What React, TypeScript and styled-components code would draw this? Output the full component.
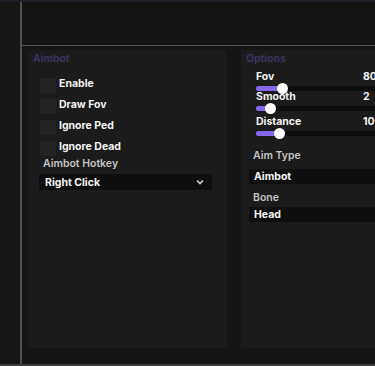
import React from "react";
import styled, { createGlobalStyle } from "styled-components";

const GlobalStyle = createGlobalStyle`
  html, body {
    margin: 0;
    padding: 0;
    background: #141414;
    overflow: hidden;
  }
  body {
    font-family: "Inter", "Open Sans", sans-serif;
  }
`;

interface SliderData {
  label: string;
  value: number;
  max: number;
  offset: number;
}

const sliders: SliderData[] = [
  { label: "Fov", value: 80, max: 370, offset: 0 },
  { label: "Smooth", value: 2, max: 17, offset: -1 },
  { label: "Distance", value: 10, max: 52, offset: 4 },
];

const toggles = ["Enable", "Draw Fov", "Ignore Ped", "Ignore Dead"];

const TRACK = 124;

export default function App() {
  return (
    <>
      <GlobalStyle />
      <Frame>
        <TopStrip />
        <Body>
          <Sidebar />
          <Main>
            <Header />
            <Content>
              <LeftPanel>
                <PanelTitle>Aimbot</PanelTitle>
                <ToggleList>
                  {toggles.map((t) => (
                    <ToggleRow key={t}>
                      <Checkbox />
                      <ToggleText>{t}</ToggleText>
                    </ToggleRow>
                  ))}
                </ToggleList>
                <FieldLabel indent={15}>Aimbot Hotkey</FieldLabel>
                <Dropdown>
                  <span>Right Click</span>
                  <svg width="8" height="6" viewBox="0 0 8 6">
                    <path
                      d="M1 1.5 L4 4.5 L7 1.5"
                      stroke="#d0d0d0"
                      strokeWidth="1.6"
                      fill="none"
                    />
                  </svg>
                </Dropdown>
              </LeftPanel>
              <RightPanel>
                <PanelTitle>Options</PanelTitle>
                <SliderList>
                  {sliders.map((s) => (
                    <SliderGroup key={s.label} offset={s.offset}>
                      <SliderHead>
                        <span>{s.label}</span>
                        <span>{s.value}</span>
                      </SliderHead>
                      <Track>
                        <Fill style={{ width: (s.value / s.max) * TRACK }}>
                          <Thumb />
                        </Fill>
                      </Track>
                    </SliderGroup>
                  ))}
                </SliderList>
                <FieldLabel indent={12} top={13}>
                  Aim Type
                </FieldLabel>
                <SelectBar top={6}>Aimbot</SelectBar>
                <FieldLabel indent={12} top={7}>
                  Bone
                </FieldLabel>
                <SelectBar top={2}>Head</SelectBar>
              </RightPanel>
            </Content>
          </Main>
        </Body>
      </Frame>
    </>
  );
}

const Frame = styled.div`
  width: 375px;
  height: 366px;
  display: flex;
  flex-direction: column;
  background: #141414;
  border-bottom: 2px solid #3a3a3a;
  box-sizing: border-box;
  overflow: hidden;
`;

const TopStrip = styled.div`
  height: 2px;
  background: #1f1f28;
  flex-shrink: 0;
`;

const Body = styled.div`
  flex: 1;
  display: flex;
  min-height: 0;
`;

const Sidebar = styled.div`
  width: 20px;
  flex-shrink: 0;
  background: #161616;
  border-right: 2px solid #4e4e4e;
`;

const Main = styled.div`
  flex: 1;
  display: flex;
  flex-direction: column;
  min-width: 0;
`;

const Header = styled.div`
  height: 43px;
  flex-shrink: 0;
  background: #141414;
  border-bottom: 1px solid #555555;
`;

const Content = styled.div`
  flex: 1;
  display: flex;
  gap: 14px;
  padding: 4px 0 0 6px;
  background: #151515;
`;

const Panel = styled.div`
  height: 298px;
  background: #1b1b1b;
  box-sizing: border-box;
  padding-top: 2px;
  flex-shrink: 0;
`;

const LeftPanel = styled(Panel)`
  width: 199px;
`;

const RightPanel = styled(Panel)`
  width: 160px;
`;

const PanelTitle = styled.div`
  height: 14px;
  line-height: 14px;
  padding-left: 5px;
  font-size: 10.5px;
  font-weight: 600;
  color: #3b3564;
`;

const ToggleList = styled.div`
  display: flex;
  flex-direction: column;
  gap: 5px;
  margin-top: 11px;
  padding-left: 12px;
`;

const ToggleRow = styled.div`
  display: flex;
  align-items: center;
  gap: 3px;
  height: 16px;
`;

const Checkbox = styled.div`
  width: 16px;
  height: 15px;
  background: #232323;
  border-radius: 1px;
`;

const ToggleText = styled.span`
  font-size: 10.5px;
  font-weight: 700;
  color: #f2f2f2;
  line-height: 14px;
  margin-top: -3px;
`;

const FieldLabel = styled.div<{ indent: number; top?: number }>`
  height: 14px;
  line-height: 14px;
  margin-top: ${(p) => p.top ?? 1}px;
  padding-left: ${(p) => p.indent}px;
  font-size: 10.5px;
  font-weight: 600;
  color: #c4c4c4;
`;

const Dropdown = styled.div`
  margin: 3px 0 0 11px;
  width: 173px;
  height: 16px;
  box-sizing: border-box;
  padding: 0 8px 0 6px;
  display: flex;
  align-items: center;
  justify-content: space-between;
  background: #0f0f0f;
  font-size: 10.5px;
  font-weight: 700;
  color: #f5f5f5;
`;

const SliderList = styled.div`
  display: flex;
  flex-direction: column;
  margin-top: 4px;
  padding-left: 15px;
`;

const SliderGroup = styled.div<{ offset: number }>`
  margin-top: ${(p) => p.offset}px;
`;

const SliderHead = styled.div`
  display: grid;
  grid-template-columns: 107px auto;
  height: 14px;
  line-height: 14px;
  font-size: 10.5px;
  font-weight: 700;
  color: #f2f2f2;
`;

const Track = styled.div`
  position: relative;
  width: ${TRACK}px;
  height: 5px;
  margin-top: 2px;
  background: #0d0d0d;
  border-radius: 2px;
`;

const Fill = styled.div`
  position: relative;
  height: 100%;
  background: #8467ec;
  border-radius: 2px 0 0 2px;
`;

const Thumb = styled.div`
  position: absolute;
  right: -5px;
  top: 50%;
  width: 11px;
  height: 11px;
  margin-top: -5.5px;
  border-radius: 50%;
  background: #ffffff;
`;

const SelectBar = styled.div<{ top: number }>`
  margin: ${(p) => p.top}px 0 0 8px;
  height: 15px;
  line-height: 15px;
  padding-left: 5px;
  background: #0f0f0f;
  font-size: 10.5px;
  font-weight: 700;
  color: #f5f5f5;
`;
